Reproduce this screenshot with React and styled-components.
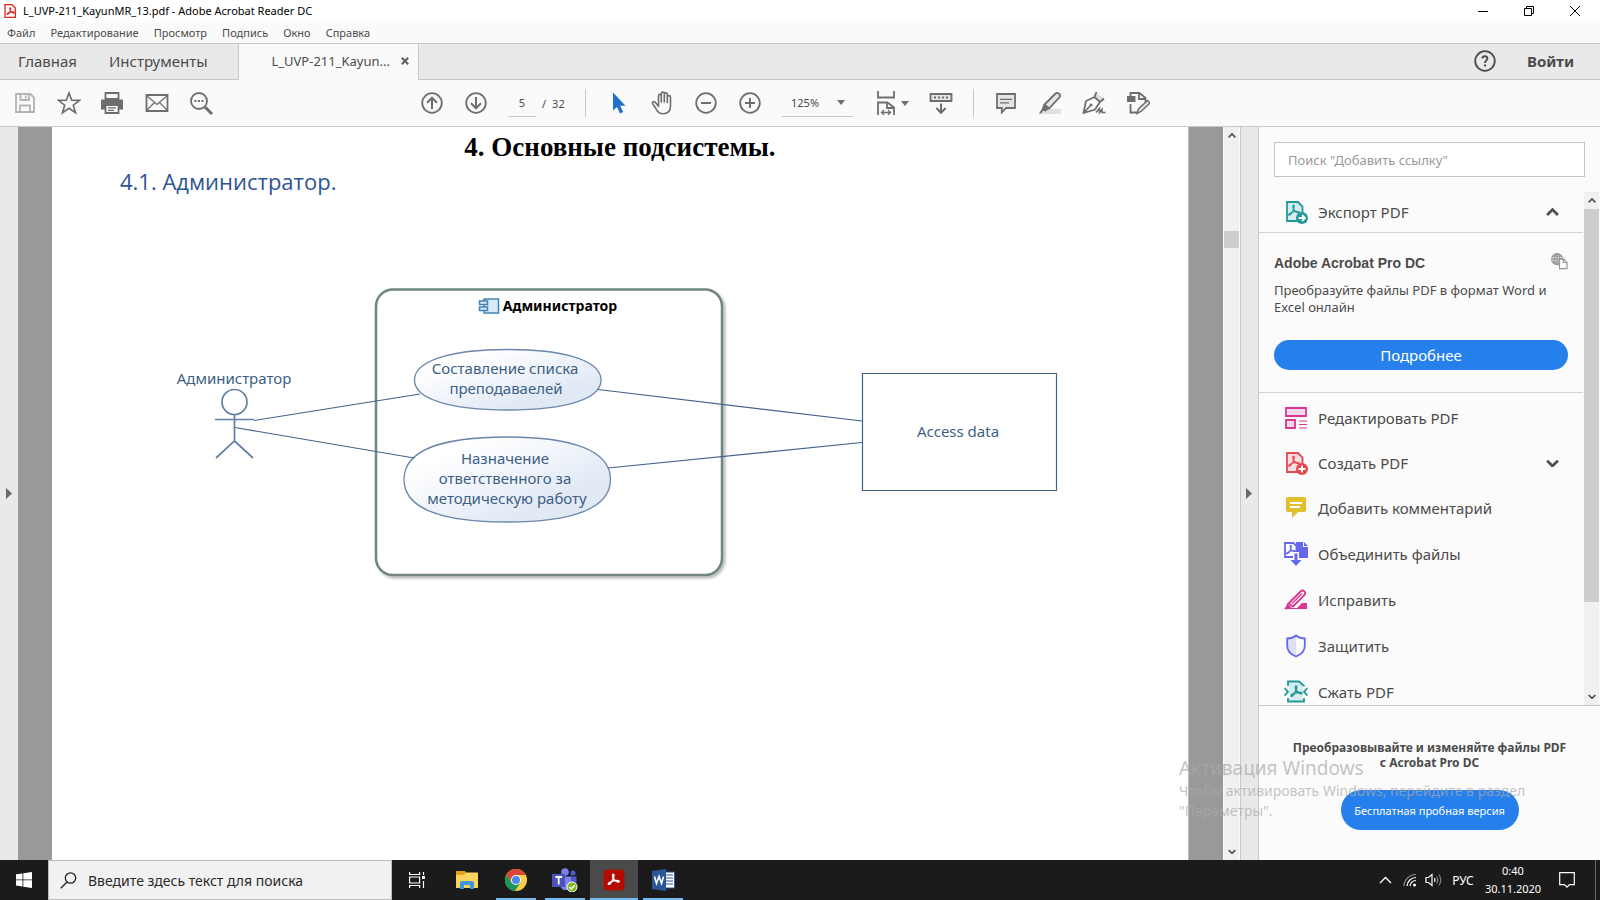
import React from "react";
import styled, { createGlobalStyle, css } from "styled-components";

const UI = `"Noto Sans", "Open Sans", sans-serif`;

const GlobalStyle = createGlobalStyle`
  * { box-sizing: border-box; }
  html, body, #root { height: 100%; }
  body { margin: 0; font-family: ${UI}; color: #4b4b4b; overflow: hidden; }
  button, input, select { font: inherit; color: inherit; margin: 0; padding: 0; border: 0; background: none; border-radius: 0; }
  button { cursor: pointer; }
  h1, h2, h3, p { margin: 0; padding: 0; }
  svg { display: block; flex: none; }
`;

/* ---------- window ---------- */
const Window = styled.div`
  display: flex;
  flex-direction: column;
  height: 100vh;
  background: #fafafa;
`;
const TitleBar = styled.header`
  display: flex;
  align-items: center;
  height: 23px;
  flex: none;
  padding: 0 2px 2px 4px;
  background: #fff;
  color: #000;
`;
const WindowTitle = styled.span`
  flex: 1;
  padding-left: 7px;
  font-size: 11px;
  line-height: 20px;
  white-space: nowrap;
`;
const WindowButton = styled.button`
  display: grid;
  place-items: center;
  width: 46px;
  height: 20px;
`;
const MenuBar = styled.nav`
  display: flex;
  gap: 15px;
  height: 20px;
  flex: none;
  padding-left: 7px;
  font-size: 11px;
  line-height: 20px;
`;
const TabBar = styled.div`
  display: flex;
  height: 37px;
  flex: none;
  border-top: 1px solid #c8c8c8;
  background: #e9e9e9;
`;
const HomeTabs = styled.div`
  display: flex;
  gap: 32px;
  width: 238px;
  padding: 0 0 2px 18px;
  border-bottom: 1px solid #c8c8c8;
`;
const HomeTab = styled.button`
  font-size: 15px;
`;
const FileTab = styled.div`
  display: flex;
  align-items: center;
  justify-content: flex-end;
  gap: 10px;
  width: 181px;
  padding: 0 8px 2px 0;
  border: solid #c8c8c8;
  border-width: 0 1px;
  background: #fafafa;
  font-size: 13px;
`;
const CloseTab = styled.button`
  display: grid;
  place-items: center;
  width: 10px;
  height: 16px;
`;
const TabTail = styled.div`
  display: flex;
  flex: 1;
  align-items: center;
  justify-content: flex-end;
  gap: 30px;
  padding: 0 26px 2px 0;
  border-bottom: 1px solid #c8c8c8;
`;
const SignIn = styled.button`
  font-size: 15px;
  font-weight: 700;
`;

/* ---------- toolbar ---------- */
const Toolbar = styled.div`
  display: flex;
  align-items: center;
  height: 47px;
  flex: none;
  padding-left: 3px;
  border-bottom: 1px solid #c8c8c8;
  font-size: 11px;
`;
const ToolGroup = styled.div`
  display: flex;
  align-items: center;
  margin-left: ${(p) => p.$gap || 0}px;
`;
const ToolButton = styled.button`
  display: flex;
  align-items: center;
  justify-content: center;
  gap: 3px;
  width: ${(p) => (p.$wide ? 56 : 44)}px;
  height: 40px;
  color: #6e6e6e;
  opacity: ${(p) => (p.$dim ? 0.5 : 1)};
`;
const PageField = styled.input`
  width: 28px;
  height: 28px;
  margin: 0 6px 0 10px;
  border-bottom: 1px solid #c8c8c8;
  text-align: center;
`;
const PageTotal = styled.span`
  display: flex;
  gap: 6px;
  width: 43px;
`;
const Divider = styled.span`
  width: 1px;
  height: 28px;
  margin-right: 10px;
  background: #c8c8c8;
`;
const ZoomBox = styled.label`
  display: flex;
  align-items: center;
  width: 71px;
  height: 28px;
  margin: 0 10px;
  padding-right: 8px;
  border-bottom: 1px solid #c8c8c8;
`;
const ZoomSelect = styled.select`
  appearance: none;
  flex: 1;
  min-width: 0;
  padding-left: 9px;
  outline: none;
`;

/* ---------- work area ---------- */
const WorkArea = styled.main`
  display: flex;
  flex: 1;
  min-height: 0;
`;
const LeftRail = styled.button`
  display: grid;
  place-items: center;
  width: 18px;
  background: #e9e9e9;
`;
const RightRail = styled(LeftRail)`
  width: 19px;
  padding-right: 2px;
  border: solid #c8c8c8;
  border-width: 0 1px;
`;
const Canvas = styled.section`
  display: flex;
  flex: 1;
  min-width: 0;
  padding: 0 34px;
  background: #999;
`;
const Page = styled.article`
  flex: 1;
  min-width: 0;
  overflow: hidden;
  border-right: 1px solid #bdbdbd;
  background: #fff;
`;
const PageHeading = styled.h1`
  font: 700 27px/40px "Liberation Serif", serif;
  color: #000;
  text-align: center;
`;
const PageSubheading = styled.h2`
  padding-left: 68px;
  font: 400 22px/28px "Open Sans", "Noto Sans", sans-serif;
  color: #2f5496;
`;
const Diagram = styled.svg`
  margin: 85px 0 0 118px;
  font-family: ${UI};
  font-size: 15px;
  fill: #3d5f85;
  text-anchor: middle;
`;

/* ---------- scrollbars ---------- */
const Scrollbar = styled.div`
  display: flex;
  flex-direction: column;
  align-items: center;
  width: 17px;
  flex: none;
  border: solid #fafafa;
  border-width: 0 1px;
  background: #f0f0f0;
`;
const ScrollArrow = styled.button`
  display: grid;
  place-items: center;
  width: 100%;
  height: 17px;
`;
const Track = styled.div`
  display: flex;
  flex: 1;
  flex-direction: column;
  width: 100%;
`;
const TrackSpace = styled.span`
  flex: ${(p) => p.$part};
`;
const Thumb = styled(TrackSpace)`
  background: #cdcdcd;
`;

/* ---------- sidebar ---------- */
const Sidebar = styled.aside`
  display: flex;
  flex-direction: column;
  width: 341px;
  flex: none;
  background: #fbfbfb;
`;
const ToolSearch = styled.input`
  height: 35px;
  flex: none;
  margin: 15px;
  padding: 0 13px;
  border: 1px solid #c4c4c4;
  background: #fff;
  font-size: 13px;
  &::placeholder { color: #999; opacity: 1; }
`;
const ToolPane = styled.div`
  display: flex;
  flex: 1;
  min-height: 0;
  border-bottom: 1px solid #c4c4c4;
`;
const ToolScroll = styled.div`
  flex: 1;
  overflow: hidden;
`;
const ToolRow = styled.button`
  display: flex;
  align-items: center;
  gap: 10px;
  width: 100%;
  height: ${(p) => p.$height || 46}px;
  padding: 0 24px 0 25px;
  font-size: 15px;
  text-align: left;
`;
const ToolLabel = styled.span`
  flex: 1;
`;
const Promo = styled.section`
  height: 161px;
  margin-bottom: 2px;
  padding: 20px 15px 0;
  border: solid #d3d3d3;
  border-width: 1px 0;
`;
const PromoHead = styled.div`
  display: flex;
  justify-content: space-between;
`;
const PromoTitle = styled.h3`
  font: 700 14px/20px "Liberation Sans", sans-serif;
`;
const PromoText = styled.p`
  height: 34px;
  margin-top: 9px;
  font-size: 13px;
  line-height: 17px;
`;
const MoreButton = styled.button`
  display: block;
  width: 100%;
  height: 30px;
  margin-top: 24px;
  border-radius: 15px;
  background: #2680eb;
  color: #fff;
  font-size: 15px;
`;
const TrialPanel = styled.section`
  display: flex;
  flex-direction: column;
  align-items: center;
  height: 154px;
  flex: none;
  padding-top: 34px;
`;
const TrialText = styled.p`
  font-size: 12px;
  font-weight: 700;
  line-height: 15px;
  text-align: center;
`;
const TrialButton = styled.button`
  height: 40px;
  width: 178px;
  margin-top: 20px;
  border-radius: 20px;
  background: #2680eb;
  color: #fff;
  font-size: 11px;
  white-space: nowrap;
`;
const Watermark = styled.div`
  position: absolute;
  right: 66px;
  bottom: 79px;
  width: 355px;
  color: rgba(170, 170, 170, 0.7);
  font-size: 14px;
  line-height: 20px;
  white-space: nowrap;
  pointer-events: none;
`;
const WatermarkTitle = styled.p`
  font-size: 19px;
  line-height: 26px;
`;

/* ---------- taskbar ---------- */
const Taskbar = styled.footer`
  display: flex;
  height: 40px;
  flex: none;
  background: #1b1b1b;
  color: #fff;
`;
const TaskButton = styled.button`
  display: grid;
  place-items: center;
  width: ${(p) => (p.$wide ? 50 : 48)}px;
  background: ${(p) => (p.$active ? "#4a4a4a" : "transparent")};
  ${(p) => p.$running && css`
    background-image: linear-gradient(#76b9ed, #76b9ed);
    background-repeat: no-repeat;
    background-position: bottom;
    background-size: ${p.$active ? "48px 2px" : "40px 2px"};
  `}
`;
const TaskSearch = styled.label`
  display: flex;
  align-items: center;
  gap: 11px;
  width: 344px;
  padding-left: 11px;
  border: 1px solid #bcbcbc;
  background: #f1f1f1;
  color: #222;
`;
const TaskSearchInput = styled.input`
  flex: 1;
  min-width: 0;
  font-size: 14px;
  &::placeholder { color: #2b2b2b; opacity: 1; }
`;
const Apps = styled.div`
  display: flex;
  flex: 1;
  gap: 1px;
`;
const Tray = styled.div`
  display: flex;
  align-items: center;
  font-size: 12px;
`;
const TrayButton = styled.button`
  display: grid;
  place-items: center;
  width: ${(p) => p.$width}px;
  height: 40px;
`;
const Clock = styled.div`
  width: 64px;
  font-size: 11px;
  line-height: 18px;
  text-align: center;
`;
const ShowDesktop = styled.button`
  width: 5px;
  height: 40px;
  margin-left: 6px;
  border-left: 1px solid #6a6a6a;
`;

/* ---------- icons ---------- */
const Svg = ({ s = 24, children, ...p }) => (
  <svg width={s} height={s} viewBox="0 0 24 24" fill="none" stroke="currentColor" strokeWidth="1.8" aria-hidden="true" {...p}>
    {children}
  </svg>
);
const Caret = () => (
  <svg width="8" height="5" viewBox="0 0 8 5" aria-hidden="true"><path d="M0 0h8L4 5z" fill="#6e6e6e" /></svg>
);
const Chevron = ({ down, w = 12, sw = 2.6 }) => (
  <svg width={w} height={w * 2 / 3} viewBox="0 0 12 8" fill="none" stroke="#4f4f4f" strokeWidth={sw} aria-hidden="true">
    <path d={down ? "M1 1.5l5 5 5-5" : "M1 6.5l5-5 5 5"} />
  </svg>
);
const RailArrow = () => (
  <svg width="6" height="11" viewBox="0 0 6 11" aria-hidden="true"><path d="M0 0v11l6-5.500z" fill="#6a6a6a" /></svg>
);
const AcroMark = (p) => (
  <path d="M8.500 7.500c-.5-3.400 1.600-3 1.200-.6C9.200 9.800 7 14 5.300 15c-1.300.7-1.600-.6-.2-1.500 2.200-1.400 6.200-2.400 8.700-2 2 .3 1.200 1.700-.6 1.100-2.200-.7-4.200-3-4.700-5.100z" fill="none" {...p} />
);

const SaveIcon = () => <Svg><path d="M3 3h14.500L21 6.500V21H3zM7.500 3v6h8.500V3M7 21v-6.500h10V21M12.800 4.500v3" /></Svg>;
const StarIcon = () => <Svg><path d="M12 2l2.700 7.200 7.800.2-6.200 4.800 2.200 7.400-6.500-4.400-6.500 4.400 2.200-7.400L1.500 9.400l7.800-.2z" strokeWidth="1.700" /></Svg>;
const PrintIcon = () => (
  <Svg>
    <path d="M4.500 2h13v6h-13z" />
    <path d="M0 8.500h22v10h-4v-4H4v4H0z" fill="currentColor" stroke="none" />
    <path d="M4.500 14h13v8h-13z" fill="#fafafa" /><path d="M7 16.800h8M7 19.300h6" strokeWidth="1.200" />
  </Svg>
);
const MailIcon = () => <Svg><path d="M1.500 4h21v16h-21z" /><path d="M2 5l10 8.500L22 5M2 19l7.500-7.500M22 19l-7.500-7.500" strokeWidth="1.300" /></Svg>;
const FindIcon = () => (
  <Svg><circle cx="10" cy="10" r="8" /><path d="M16 16l7 7" strokeWidth="3" /><path d="M5.500 10h2M9 10h2M12.500 10h2" strokeWidth="2" /></Svg>
);
const ArrowCircle = ({ down }) => (
  <Svg><circle cx="12" cy="12" r="9.800" /><path d={down ? "M12 6v11M7 12.300l5 5 5-5" : "M12 18V7M7 11.700l5-5 5 5"} strokeWidth="2" /></Svg>
);
const SignCircle = ({ plus }) => (
  <Svg><circle cx="12" cy="12" r="9.800" /><path d={plus ? "M7 12h10M12 7v10" : "M7 12h10"} strokeWidth="2" /></Svg>
);
const CursorIcon = () => <Svg><path d="M7 1.500v18l4-3.500 3 6.500 3.200-1.500-3-6.200H19.500z" fill="#1f72cb" stroke="none" /></Svg>;
const HandIcon = () => (
  <Svg strokeWidth="1.600" strokeLinecap="round" strokeLinejoin="round">
    <path d="M7.500 13.500V5c0-2.200 2.800-2.200 2.800 0v6V2.800c0-2.200 3-2.200 3 0V11 3.500c0-2.200 3-2.200 3 0V11.500 6.300c0-2.200 3.200-2.200 3.200 0v8.500c0 5.500-3 8-7.500 8-4 0-5.500-2-7-5L1.700 12.800c-1-2 1.200-3 2.500-1.500l3.300 4z" transform="translate(1 0)" />
  </Svg>
);
const FitIcon = () => (
  <Svg><path d="M4 0v6.500h16V0M4 24V11.500h9.500l6.500 5V24M13 12v5h7" /><path d="M8 21.500h8M10 19l-2.500 2.500L10 24M14 19l2.500 2.500L14 24" strokeWidth="1.300" /></Svg>
);
const ScrollPageIcon = () => (
  <Svg><path d="M1.500 3h21v7h-21z" fill="#e4e4e4" /><path d="M5 6.500h2M9 6.500h2M13 6.500h2M17 6.500h2" strokeWidth="2" /><path d="M12 12.500v9M7.300 17l4.700 4.800 4.700-4.800" strokeWidth="2" /></Svg>
);
const CommentIcon = () => (
  <Svg><path d="M3 3h18v14h-9l-4.200 4.500V17H3z" fill="#e4e4e4" /><path d="M6 8.300h12M6 11.800h9" strokeWidth="1.200" /></Svg>
);
const MarkerIcon = () => (
  <Svg>
    <path d="M8 18h15v5H1z" fill="#e0e0e0" stroke="none" />
    <path d="M6.500 13.500L17.500 2.500c2-1.500 5.500.5 4.200 3.500L11 17.500z" fill="#e4e4e4" />
    <path d="M5.500 13.500l5.500 4.500-3.500 2.500-2.500-.8L3 22.500H1l2.500-4z" fill="currentColor" stroke="none" />
  </Svg>
);
const PenIcon = () => (
  <Svg>
    <path d="M12.500 5.500L15 2l7 5.500-4 3z" fill="#e0e0e0" stroke="none" />
    <path d="M14.500 1l-2 5 5.500 5 4-3.500M12.500 6L4 10 1.500 22l11.500-3.500 5-7.500M1.500 22l6.500-7" />
    <circle cx="9" cy="14" r="1.500" fill="currentColor" stroke="none" />
    <path d="M14 21.500l3.500-4v4l2.500-3v3h3.500" strokeWidth="1.600" />
  </Svg>
);
const EditDocIcon = () => (
  <Svg>
    <path d="M4.500 5V2h9l6 5v4M13 2v6h6.500M4.500 13v8.500H11" />
    <path d="M1 5h8.500v6H1z" fill="currentColor" stroke="none" />
    <path d="M11 22.500l1.500-4.500 9-8.500 2.500 2.500-9 8.500z" fill="#e4e4e4" strokeWidth="1.500" />
  </Svg>
);
const ExportIcon = () => (
  <Svg stroke="#21999b">
    <path d="M3 2h11l4.500 4.500V21H3z" fill="#d6eced" /><g transform="translate(.5 0)"><AcroMark strokeWidth="1.200" /></g>
    <circle cx="18" cy="18" r="6" fill="#21999b" stroke="none" /><path d="M14.500 18h6M18 15l3 3-3 3" stroke="#fff" />
  </Svg>
);
const CreateIcon = () => (
  <Svg stroke="#e34850">
    <path d="M3 2h11l4.500 4.500V21H3z" fill="#fbdfe0" /><g transform="translate(.5 0)"><AcroMark strokeWidth="1.200" /></g>
    <circle cx="18" cy="18" r="6" fill="#e34850" stroke="none" /><path d="M14.500 18h7M18 14.500v7" stroke="#fff" />
  </Svg>
);
const EditIcon = () => (
  <Svg stroke="#d83790"><path d="M2 2h20v8H2zM2 14h9v8H2z" fill="#f6d8ea" /><path d="M15 15h8M15 18.500h8M15 22h8" strokeWidth="1.200" /></Svg>
);
const NoteIcon = () => (
  <Svg><path d="M4 1h16c1.500 0 2 .8 2 2v11c0 1.300-.7 2-2 2h-6l-6 6v-6H4c-1.300 0-2-.7-2-2V3c0-1.300.7-2 2-2z" fill="#dfbf2b" stroke="none" /><path d="M6 7h12M6 11h10" stroke="#fff" /></Svg>
);
const CombineIcon = () => (
  <Svg stroke="#6767ec">
    <path d="M12 0h7v5h5v11H12z" fill="#6767ec" stroke="none" /><path d="M20 0l4 4h-4z" fill="#6767ec" stroke="none" />
    <path d="M1 1h8.500l3 3V15H1z" fill="#fff" /><g transform="translate(-1 -1) scale(.85)"><AcroMark strokeWidth="1.300" /></g>
    <path d="M9 10h6v9H9z" fill="#fff" stroke="none" /><path d="M10.500 11.500h3V18h4L12 24l-5.500-6h4z" fill="#6767ec" stroke="none" />
  </Svg>
);
const RedactIcon = () => (
  <Svg stroke="#d83790">
    <path d="M13 20l5-5h5v6H0l4-4 3 3z" fill="#d83790" stroke="none" />
    <path d="M4.500 15.500L16.500 3.500c3-2.500 6 .8 4 3.500L9 18.500z" fill="#fbfbfb" /><path d="M8 15.500L18 5.500" strokeWidth="1.200" />
    <path d="M1 21.500l2-6 5.500 5z" fill="#d83790" stroke="none" />
  </Svg>
);
const ShieldIcon = () => (
  <Svg stroke="#6767ec"><path d="M12 2v20c-5-2-9-5-9-10V4.500C6.500 5 9.500 4 12 2z" fill="#dedef9" stroke="none" /><path d="M12 1.500c2.500 2 5.500 3 8.800 3V12c0 5-4 8.500-8.800 10.500C7.200 20.500 3.200 17 3.200 12V4.500c3.300 0 6.300-1 8.800-3z" /></Svg>
);
const CompressIcon = () => (
  <Svg stroke="#21999b">
    <path d="M4 6V1.500h11L20 6v15.500H4z" fill="#d6eced" />
    <path d="M0 6h6v12H0zM18 6.500h6V18h-6z" fill="#fbfbfb" stroke="none" /><path d="M5 6h14v11H5z" fill="#d6eced" stroke="none" />
    <g transform="translate(3 1)"><AcroMark strokeWidth="1.600" /></g>
    <path d="M.7 8l3.300 3.800-3.300 3.800M23.300 8L20 11.800l3.300 3.800" />
  </Svg>
);
const GlobePageIcon = () => (
  <svg width="17" height="17" viewBox="0 0 18 18" fill="none" stroke="#969696" strokeWidth="1.200" aria-hidden="true">
    <circle cx="6.500" cy="6.500" r="5.800" fill="#dcdcdc" /><path d="M1 6.500h11M6.500 1v11M2 3.500h9M2 9.500h9" /><ellipse cx="6.500" cy="6.500" rx="2.800" ry="5.500" />
    <path d="M9 6.500h4.500l3.500 3.500v6.500H9zM13 6.500v3.500h3.500" fill="#fbfbfb" />
  </svg>
);
const HelpIcon = () => (
  <Svg><circle cx="12" cy="12" r="9.800" /><path d="M9.300 9.500c.3-3.200 5.500-2.800 5.100.2-.2 1.600-2.400 2-2.400 4.300M12 15.500v2" strokeWidth="2" /></Svg>
);
const PdfFileIcon = () => (
  <svg width="12" height="14" viewBox="0 0 12 14" fill="none" stroke="#e1251b" aria-hidden="true">
    <path d="M1 .7h7L11.300 4v9.300H1z" fill="#fff" strokeWidth="1.300" /><g transform="translate(.4 .6) scale(.65)"><AcroMark strokeWidth="1.900" /></g>
  </svg>
);
const StartIcon = () => <svg width="16" height="16" viewBox="0 0 16 16" fill="#fff" aria-hidden="true"><path d="M0 2.300l6.500-.9v6.100H0zM7.300 1.300L16 0v7.500H7.300zM0 8.300h6.500v6.200L0 13.600zM7.300 8.300H16V16l-8.700-1.300z" /></svg>;
const LensIcon = () => <svg width="17" height="17" viewBox="0 0 17 17" fill="none" stroke="#222" strokeWidth="1.300" aria-hidden="true"><circle cx="10.500" cy="6" r="5.200" /><path d="M7 10L.8 16.200" /></svg>;
const TaskViewIcon = () => (
  <svg width="17" height="16" viewBox="0 0 17 16" fill="none" stroke="#fff" strokeWidth="1.200" aria-hidden="true"><path d="M.6 0v2.500h10V0M.6 16v-2.500h10V16M.6 5h10v6H.6zM14.500 0v3M14.500 9v7" /><path d="M13 4h3v3h-3z" fill="#fff" stroke="none" /></svg>
);
const FolderIcon = () => (
  <svg width="22" height="18" viewBox="0 0 22 18" aria-hidden="true"><path d="M0 0h9l1.500 2H22v15H0z" fill="#e5a31a" /><path d="M0 4h8l2-2.500h12V17H0z" fill="#fcd462" /><path d="M4 18v-6.500L5.500 10h11l1.500 1.500V18h-4v-4H8v4z" fill="#3d97dc" /></svg>
);
const ChromeIcon = () => (
  <svg width="22" height="22" viewBox="0 0 22 22" aria-hidden="true">
    <circle cx="11" cy="11" r="11" fill="#fbcf45" /><path d="M1.500 5.500A11 11 0 0 0 10 22l5.500-8.500L11 11l-4.500 2.500z" fill="#19975a" /><path d="M11 6h9.800A11 11 0 0 0 1.500 5.500L6.300 13z" fill="#db4437" />
    <circle cx="11" cy="11" r="5" fill="#fff" /><circle cx="11" cy="11" r="4" fill="#4a87ee" />
  </svg>
);
const TeamsIcon = () => (
  <svg width="26" height="24" viewBox="0 0 26 24" aria-hidden="true">
    <circle cx="13" cy="4" r="3.800" fill="#7b83eb" /><circle cx="21" cy="5" r="2.600" fill="#5059c9" /><path d="M17 8.500h7.500V16c0 3-4 4.500-7.500 3z" fill="#5059c9" /><path d="M8 8.500h11V16c0 8-11 8-11 0z" fill="#7b83eb" /><path d="M0 6h13v13H0z" fill="#4b53bc" />
    <path d="M3.500 9h6.500M6.700 9v7.500" stroke="#fff" strokeWidth="1.800" /><circle cx="20" cy="19" r="5" fill="#80ba1c" stroke="#fff" /><path d="M17.300 19l2 2 3.500-3.800" stroke="#fff" strokeWidth="1.500" fill="none" />
  </svg>
);
const AcrobatIcon = () => (
  <svg width="22" height="22" viewBox="0 0 22 22" fill="none" stroke="#fff" aria-hidden="true"><rect x=".5" y=".5" width="21" height="21" rx="4" fill="#b30b00" stroke="none" /><g transform="translate(1.200 .2)"><AcroMark strokeWidth="1.500" /></g></svg>
);
const WordIcon = () => (
  <svg width="23" height="22" viewBox="0 0 23 22" aria-hidden="true"><path d="M12 3h10.500v16H12z" fill="#fff" stroke="#2b579a" /><path d="M14 6h7M14 9h7M14 12h7M14 15h7" stroke="#2b579a" strokeWidth="1.200" /><path d="M0 2l14-2v22L0 20z" fill="#2b579a" /><path d="M2.500 7.500l2 7 2.500-7 2.500 7 2-7" stroke="#fff" strokeWidth="1.600" fill="none" /></svg>
);
const WifiIcon = () => (
  <svg width="14" height="14" viewBox="0 0 14 14" fill="none" stroke="#fff" strokeWidth="1.200" aria-hidden="true"><path d="M1 13A12 12 0 0 1 13 1.500" opacity=".5" /><path d="M4 13a9 9 0 0 1 9-8.500M7 13a6 6 0 0 1 6-5.500" /><circle cx="11.500" cy="12" r="1.500" fill="#fff" stroke="none" /></svg>
);
const SoundIcon = () => (
  <svg width="17" height="14" viewBox="0 0 17 14" fill="none" stroke="#fff" strokeWidth="1.200" aria-hidden="true"><path d="M1 4.500h2.500l3.500-3v11l-3.500-3H1z" /><path d="M9.500 5q1 2 0 4" /><path d="M11.500 3.500q2.500 3.500 0 7M14 1.500q3.500 5.500 0 11" opacity=".45" /></svg>
);
const TrayChevron = () => <svg width="13" height="8" viewBox="0 0 13 8" fill="none" stroke="#fff" strokeWidth="1.400" aria-hidden="true"><path d="M1 7l5.500-5.500L12 7" /></svg>;
const NoticeIcon = () => <svg width="16" height="16" viewBox="0 0 16 16" fill="none" stroke="#fff" strokeWidth="1.200" aria-hidden="true"><path d="M.7.700h14.600v12h-4.800L8 15.200l-2.500-2.500H.7z" /></svg>;
const MinimizeIcon = () => <svg width="10" height="10" viewBox="0 0 10 10" stroke="#000" aria-hidden="true"><path d="M0 5.500h10" /></svg>;
const RestoreIcon = () => <svg width="10" height="10" viewBox="0 0 10 10" fill="none" stroke="#000" aria-hidden="true"><path d="M.5 2.500h7v7h-7zM2.500 2.500v-2h7v7h-2" /></svg>;
const CloseIcon = () => <svg width="10" height="10" viewBox="0 0 10 10" stroke="#000" aria-hidden="true"><path d="M0 0l10 10M10 0L0 10" /></svg>;
const TabCloseIcon = () => <svg width="8" height="8" viewBox="0 0 8 8" stroke="#5f5f5f" strokeWidth="2" aria-hidden="true"><path d="M.8.800l6.400 6.400M7.200.8L.8 7.200" /></svg>;

const tools = [
  ["Редактировать PDF", EditIcon],
  ["Создать PDF", CreateIcon, true],
  ["Добавить комментарий", NoteIcon],
  ["Объединить файлы", CombineIcon],
  ["Исправить", RedactIcon],
  ["Защитить", ShieldIcon],
  ["Сжать PDF", CompressIcon],
];

const UseCaseDiagram = () => (
  <Diagram width="900" height="310" viewBox="170 280 900 310" role="img" aria-label="Диаграмма подсистемы">
    <defs>
      <linearGradient id="usecase" x1="0" y1="0" x2="1" y2="1">
        <stop offset=".2" stopColor="#fff" /><stop offset=".75" stopColor="#e1e9f5" />
      </linearGradient>
      <filter id="shadow" x="-5%" y="-5%" width="110%" height="110%">
        <feDropShadow dx="2" dy="2" stdDeviation="1.500" floodOpacity=".3" />
      </filter>
    </defs>
    <rect x="376" y="289.500" width="346" height="285.500" rx="17" fill="#fff" stroke="#6f8584" strokeWidth="2.500" filter="url(#shadow)" />
    <g fill="#d9ebf9" stroke="#4482b4" strokeWidth="1.500">
      <path d="M484 299h14.500v14H484z" /><path d="M479.500 301h8v3.500h-8zM479.500 307h8v3.500h-8z" />
    </g>
    <g stroke="#6c86ac" strokeWidth="1.300" fill="url(#usecase)">
      <path d="M508 349.500c60 0 93 12 93 30.500s-33 30-93 30-93.500-11.500-93.500-30 33.500-30.500 93.500-30.500z" />
      <path d="M507 437c64 0 103.500 13 103.500 42.500S571 522 507 522s-103-13-103-42.500S443 437 507 437z" />
    </g>
    <g stroke="#41628b" strokeWidth="1.200" fill="none">
      <path d="M254 420.500L420 394M235 427.500L414 458M598 389.500L862 421M608 468L862 442.500" />
      <path d="M862.500 373.500h194v117h-194z" fill="#fff" />
    </g>
    <g stroke="#6180a6" strokeWidth="1.700" fill="none">
      <circle cx="234.500" cy="402" r="12.500" /><path d="M234.500 414.500v26.500L216 458M234.500 441l18.500 17M215 419.500h39" />
    </g>
    <text x="234" y="384">Администратор</text>
    <text x="560" y="311" fill="#000" fontWeight="700" fontSize="14">Администратор</text>
    <text x="505" y="374">Составление списка</text>
    <text x="506" y="394">преподаваелей</text>
    <text x="505" y="464">Назначение</text>
    <text x="505" y="484">ответственного за</text>
    <text x="507" y="504">методическую работу</text>
    <text x="958" y="437">Access data</text>
  </Diagram>
);

export default function App() {
  return (
    <>
      <GlobalStyle />
      <Window>
        <TitleBar>
          <PdfFileIcon />
          <WindowTitle>L_UVP-211_KayunMR_13.pdf - Adobe Acrobat Reader DC</WindowTitle>
          <WindowButton aria-label="Свернуть"><MinimizeIcon /></WindowButton>
          <WindowButton aria-label="Восстановить"><RestoreIcon /></WindowButton>
          <WindowButton aria-label="Закрыть"><CloseIcon /></WindowButton>
        </TitleBar>
        <MenuBar>
          {["Файл", "Редактирование", "Просмотр", "Подпись", "Окно", "Справка"].map((m) => <button key={m}>{m}</button>)}
        </MenuBar>
        <TabBar>
          <HomeTabs><HomeTab>Главная</HomeTab><HomeTab>Инструменты</HomeTab></HomeTabs>
          <FileTab>L_UVP-211_Kayun...<CloseTab aria-label="Закрыть вкладку"><TabCloseIcon /></CloseTab></FileTab>
          <TabTail><button aria-label="Помощь"><HelpIcon /></button><SignIn>Войти</SignIn></TabTail>
        </TabBar>
        <Toolbar>
          <ToolGroup>
            <ToolButton $dim aria-label="Сохранить"><SaveIcon /></ToolButton>
            <ToolButton aria-label="Избранное"><StarIcon /></ToolButton>
            <ToolButton aria-label="Печать"><PrintIcon /></ToolButton>
            <ToolButton aria-label="Отправить"><MailIcon /></ToolButton>
            <ToolButton aria-label="Найти"><FindIcon /></ToolButton>
          </ToolGroup>
          <ToolGroup $gap={187}>
            <ToolButton aria-label="Предыдущая страница"><ArrowCircle /></ToolButton>
            <ToolButton aria-label="Следующая страница"><ArrowCircle down /></ToolButton>
            <PageField aria-label="Страница" defaultValue="5" />
            <PageTotal><span>/</span><span>32</span></PageTotal>
            <Divider />
            <ToolButton aria-label="Выделение"><CursorIcon /></ToolButton>
            <ToolButton aria-label="Рука"><HandIcon /></ToolButton>
            <ToolButton aria-label="Уменьшить"><SignCircle /></ToolButton>
            <ToolButton aria-label="Увеличить"><SignCircle plus /></ToolButton>
            <ZoomBox><ZoomSelect aria-label="Масштаб"><option>125%</option></ZoomSelect><Caret /></ZoomBox>
            <ToolButton $wide aria-label="По ширине"><FitIcon /><Caret /></ToolButton>
            <ToolButton aria-label="Прокрутка"><ScrollPageIcon /></ToolButton>
          </ToolGroup>
          <ToolGroup $gap={10}>
            <Divider />
            <ToolButton aria-label="Комментарий"><CommentIcon /></ToolButton>
            <ToolButton aria-label="Маркер"><MarkerIcon /></ToolButton>
            <ToolButton aria-label="Подписать"><PenIcon /></ToolButton>
            <ToolButton aria-label="Правка"><EditDocIcon /></ToolButton>
          </ToolGroup>
        </Toolbar>
        <WorkArea>
          <LeftRail aria-label="Показать панель навигации"><RailArrow /></LeftRail>
          <Canvas>
            <Page>
              <PageHeading>4. Основные подсистемы.</PageHeading>
              <PageSubheading>4.1. Администратор.</PageSubheading>
              <UseCaseDiagram />
            </Page>
          </Canvas>
          <Scrollbar>
            <ScrollArrow aria-label="Вверх"><Chevron w={8} /></ScrollArrow>
            <Track><TrackSpace $part={87} /><Thumb $part={17} /><TrackSpace $part={595} /></Track>
            <ScrollArrow aria-label="Вниз"><Chevron down w={8} /></ScrollArrow>
          </Scrollbar>
          <RightRail aria-label="Скрыть панель инструментов"><RailArrow /></RightRail>
          <Sidebar>
            <ToolSearch aria-label="Поиск инструментов" placeholder={'Поиск "Добавить ссылку"'} />
            <ToolPane>
              <ToolScroll>
                <ToolRow $height={40}><ExportIcon /><ToolLabel>Экспорт PDF</ToolLabel><Chevron w={13} /></ToolRow>
                <Promo>
                  <PromoHead><PromoTitle>Adobe Acrobat Pro DC</PromoTitle><GlobePageIcon /></PromoHead>
                  <PromoText>Преобразуйте файлы PDF в формат Word и Excel онлайн</PromoText>
                  <MoreButton>Подробнее</MoreButton>
                </Promo>
                {tools.map(([label, Icon, more]) => (
                  <ToolRow key={label} $height={more ? 44 : 46}>
                    <Icon /><ToolLabel>{label}</ToolLabel>{more && <Chevron down w={13} />}
                  </ToolRow>
                ))}
              </ToolScroll>
              <Scrollbar>
                <ScrollArrow aria-label="Вверх"><Chevron w={8} /></ScrollArrow>
                <Track><Thumb $part={393} /><TrackSpace $part={86} /></Track>
                <ScrollArrow aria-label="Вниз"><Chevron down w={8} /></ScrollArrow>
              </Scrollbar>
            </ToolPane>
            <TrialPanel>
              <TrialText>Преобразовывайте и изменяйте файлы PDF<br />с Acrobat Pro DC</TrialText>
              <TrialButton>Бесплатная пробная версия</TrialButton>
            </TrialPanel>
          </Sidebar>
        </WorkArea>
        <Taskbar>
          <TaskButton aria-label="Пуск"><StartIcon /></TaskButton>
          <TaskSearch><LensIcon /><TaskSearchInput aria-label="Поиск" placeholder="Введите здесь текст для поиска" /></TaskSearch>
          <Apps>
            <TaskButton $wide aria-label="Представление задач"><TaskViewIcon /></TaskButton>
            <TaskButton aria-label="Проводник"><FolderIcon /></TaskButton>
            <TaskButton $running aria-label="Chrome"><ChromeIcon /></TaskButton>
            <TaskButton $running aria-label="Teams"><TeamsIcon /></TaskButton>
            <TaskButton $running $active aria-label="Acrobat"><AcrobatIcon /></TaskButton>
            <TaskButton $running aria-label="Word"><WordIcon /></TaskButton>
          </Apps>
          <Tray>
            <TrayButton $width={28} aria-label="Скрытые значки"><TrayChevron /></TrayButton>
            <TrayButton $width={22} aria-label="Сеть"><WifiIcon /></TrayButton>
            <TrayButton $width={24} aria-label="Звук"><SoundIcon /></TrayButton>
            <TrayButton $width={36}>РУС</TrayButton>
            <Clock>0:40<br />30.11.2020</Clock>
            <TrayButton $width={44} aria-label="Уведомления"><NoticeIcon /></TrayButton>
            <ShowDesktop aria-label="Показать рабочий стол" />
          </Tray>
        </Taskbar>
        <Watermark>
          <WatermarkTitle>Активация Windows</WatermarkTitle>
          <p>Чтобы активировать Windows, перейдите в раздел</p>
          <p>"Параметры".</p>
        </Watermark>
      </Window>
    </>
  );
}
